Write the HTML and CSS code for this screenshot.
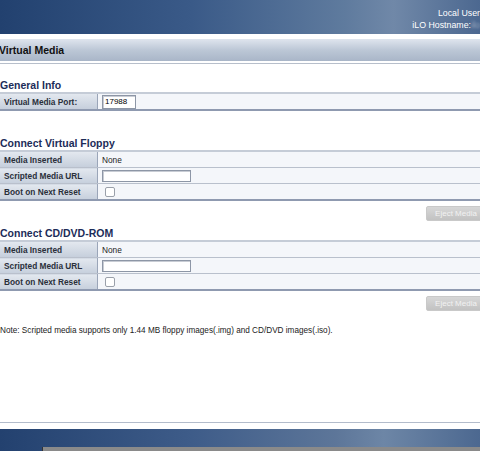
FILE: index.html
```html
<!DOCTYPE html>
<html lang="en">

<head>
    <meta charset="UTF-8">
    <meta name="viewport" content="width=device-width, initial-scale=1.0">
    <title>Virtual Media</title>
    <link rel="stylesheet" href="styles.css">
</head>

<body>
    <div class="page">
        <div class="header">
            <div class="header-info">
                <div>Local User</div>
                <div>iLO Hostname:<span class="blur">ilo</span></div>
            </div>
        </div>

        <div class="title-bar">Virtual Media</div>

        <div class="content">
            <h3>General Info</h3>
            <table class="info">
                <tr>
                    <td class="label">Virtual Media Port:</td>
                    <td><input type="text" class="port" value="17988"></td>
                </tr>
            </table>

            <h3 class="gap">Connect Virtual Floppy</h3>
            <table class="info">
                <tr>
                    <td class="label">Media Inserted</td>
                    <td>None</td>
                </tr>
                <tr>
                    <td class="label">Scripted Media URL</td>
                    <td><input type="text" class="url"></td>
                </tr>
                <tr>
                    <td class="label">Boot on Next Reset</td>
                    <td><span class="check"></span></td>
                </tr>
            </table>
            <div class="actions"><button disabled>Eject Media</button></div>

            <h3>Connect CD/DVD-ROM</h3>
            <table class="info">
                <tr>
                    <td class="label">Media Inserted</td>
                    <td>None</td>
                </tr>
                <tr>
                    <td class="label">Scripted Media URL</td>
                    <td><input type="text" class="url"></td>
                </tr>
                <tr>
                    <td class="label">Boot on Next Reset</td>
                    <td><span class="check"></span></td>
                </tr>
            </table>
            <div class="actions"><button disabled>Eject Media</button></div>

            <p class="note">Note: Scripted media supports only 1.44 MB floppy images(.img) and CD/DVD images(.iso).</p>
        </div>

        <div class="footer-line"></div>
        <div class="footer"><div class="footer-strip"></div></div>
    </div>
</body>

</html>
```

FILE: styles.css
```css
body {
    margin: 0;
    font-family: "Liberation Sans", Arial, sans-serif;
    font-size: 8px;
    color: #222;
    background: white;
    overflow: hidden;
}

.page {
    width: 480px;
    height: 451px;
    display: flex;
    flex-direction: column;
}

.header {
    height: 34px;
    flex-shrink: 0;
    background: linear-gradient(to right, #22416f 0%, #3a5a88 40%, #5f7b9e 72%, #7088a8 82%, #4c6890 100%);
    display: flex;
    justify-content: flex-end;
}

.header-info {
    color: white;
    font-size: 8.8px;
    text-align: right;
    padding: 7px 0 0 0;
    line-height: 12px;
    white-space: nowrap;
}

.blur {
    color: #9aa8bd;
    display: inline-block;
    width: 9px;
    overflow: hidden;
    vertical-align: top;
    filter: blur(1px);
}

.title-bar {
    margin-top: 5px;
    height: 22px;
    line-height: 22px;
    flex-shrink: 0;
    background: linear-gradient(to bottom, #dfe5ee 0%, #bcc7d6 50%, #a9b6c8 100%);
    font-size: 10.5px;
    font-weight: bold;
    color: #111;
    text-indent: -1px;
    box-shadow: 0 2px 0 #fff, 0 3px 0 #b7bfcb;
}

.content {
    flex: 1;
}

h3 {
    margin: 6px 0 1px 0;
    font-size: 10.5px;
    color: #1c2c58;
    line-height: 12px;
}

.content > h3:first-child {
    margin-top: 18px;
}

h3.gap {
    margin-top: 26px;
}

.info {
    width: 100%;
    border-collapse: collapse;
    border-top: 2px solid #c5ccd7;
    border-bottom: 2px solid #8f9ab0;
}

.info td {
    height: 15px;
    padding: 0 4px;
    border-bottom: 1px solid #b9c0cc;
    background: #f4f6fa;
    color: #222;
    font-size: 8.3px;
}

.info td.label {
    width: 89px;
    font-weight: bold;
    color: #2a2f3a;
    background: linear-gradient(to bottom, #e3e8ef 0%, #c6cfdc 100%);
    border-right: 1px solid #9aa5b8;
}

input {
    font-family: inherit;
    font-size: 8px;
    border: 1px solid #8d96a6;
    box-shadow: inset 1px 1px 0 #c8ccd4;
    padding: 0 2px;
    height: 12px;
    box-sizing: border-box;
    vertical-align: middle;
    background: white;
}

.port {
    width: 34px;
    height: 14px;
}

.url {
    width: 89px;
}

.check {
    display: inline-block;
    width: 8px;
    height: 8px;
    border: 1px solid #9aa0aa;
    border-radius: 2px;
    background: white;
    margin-left: 3px;
    vertical-align: middle;
}

.actions {
    display: flex;
    justify-content: flex-end;
    padding-top: 5px;
}

button {
    font-family: inherit;
    font-size: 8px;
    color: #f2f2f2;
    background: linear-gradient(to bottom, #d7d7d7, #c2c2c2);
    border: 1px solid #c9c9c9;
    border-radius: 2px;
    height: 15px;
    width: 60px;
    padding: 0;
    margin-right: -6px;
    flex-shrink: 0;
}

.note {
    margin: 15px 0 0 0;
    font-size: 8.2px;
    color: #222;
}

.footer-line {
    border-top: 1px solid #b3bccb;
    flex-shrink: 0;
}

.footer {
    height: 22px;
    flex-shrink: 0;
    margin-top: 6px;
    background: linear-gradient(to right, #23416f 0%, #3e5c89 40%, #5d7699 70%, #6d86a6 80%, #4c6890 100%);
    position: relative;
}

.footer-strip {
    position: absolute;
    left: 42px;
    right: 0;
    bottom: 0;
    height: 4px;
    background: #8a8a8a;
    border-left: 1px solid #333;
}
```
